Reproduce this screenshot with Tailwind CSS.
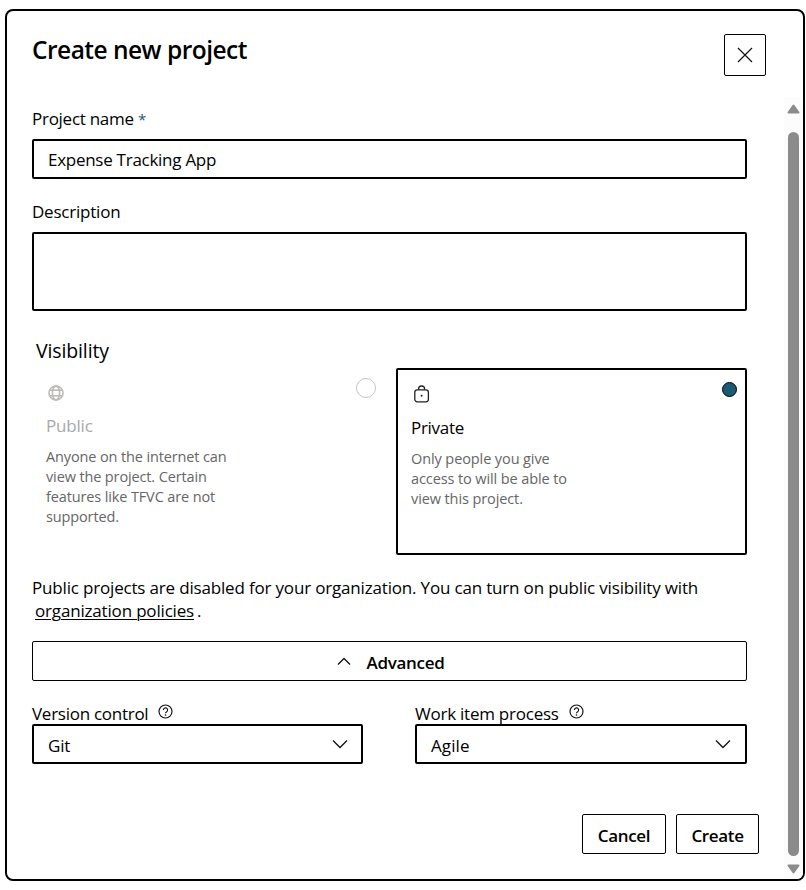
<!DOCTYPE html>
<html lang="en">
<head>
<meta charset="utf-8">
<title>Create new project</title>
<script src="https://cdn.jsdelivr.net/npm/@tailwindcss/browser@4"></script>
</head>
<body class="bg-white text-black font-['Open_Sans','Noto_Sans',sans-serif] text-[17px] leading-6 overflow-hidden whitespace-nowrap">
<main class="ml-[5px] mt-[9px] w-[800px] h-[872px] border-2 border-black rounded-lg flex flex-col">
  <header class="h-[86px] shrink-0 flex justify-between pl-[25px] pr-[37px] pt-[23px]">
    <h1 class="text-[24.5px] leading-8 font-semibold tracking-[-0.52px]">Create new project</h1>
    <button class="size-[42px] border border-black rounded-[2px] flex items-center justify-center" aria-label="Close">
      <svg width="16" height="16" viewBox="0 0 16 16" fill="none" stroke="#111" stroke-width="1.2"><path d="M1 1l14 14M15 1L1 15"/></svg>
    </button>
  </header>
  <div class="flex flex-1 min-h-0 justify-between">
    <form class="ml-[25px] w-[727px] pt-[10px] flex flex-col">
      <label class="tracking-[-0.27px] h-8 block">Project name <span class="text-[15px] text-[#1b5a73]">*</span></label>
      <div class="w-[715px] h-10 border-2 border-black rounded-[2px] pl-[14px] pt-0.5 flex items-center tracking-[-0.27px]">Expense Tracking App</div>
      <label class="tracking-[-0.22px] h-8 mt-[21px] block">Description</label>
      <div class="w-[715px] h-[79px] border-2 border-black rounded-[2px]"></div>
      <h2 class="ml-1 mt-7 h-[29px] text-[19.5px] tracking-[-0.13px]">Visibility</h2>
      <div class="w-[715px] h-[187px] flex justify-between">
        <section class="w-[346px] flex justify-between pl-[14px] pt-[17px] text-[#a9a9a9]">
          <div>
            <svg class="ml-0.5" width="16" height="16" viewBox="0 0 16 16" fill="none" stroke="#bdb8b8" stroke-width="1.6"><circle cx="8" cy="8" r="7"/><ellipse cx="8" cy="8" rx="3.6" ry="7"/><path d="M1.6 5.3h12.8M1.6 10.7h12.8"/></svg>
            <h3 class="mt-[13px] tracking-[-0.2px]">Public</h3>
            <p class="mt-[9px] text-[14.5px] leading-5 tracking-[-0.13px] text-[#666]">Anyone on the internet can<br>view the project. Certain<br>features like TFVC are not<br>supported.</p>
          </div>
          <span class="mr-0.5 -mt-[7px] size-5 rounded-full border border-[#c4c4c4]"></span>
        </section>
        <section class="w-[351px] border-2 border-black rounded-[2px] flex justify-between pl-[13px] pr-2 pt-[15px]">
          <div>
            <svg class="ml-[3px]" width="17" height="18" viewBox="0 0 17 18" fill="none" stroke="#222" stroke-width="1.3"><rect x=".8" y="4.8" width="13.6" height="12" rx="2.5"/><path d="M4.6 4.8V4a3 3 0 0 1 6 0v.8"/><circle cx="7.6" cy="10.8" r="1" fill="#222" stroke="none"/></svg>
            <h3 class="mt-[13px] tracking-[-0.3px]">Private</h3>
            <p class="mt-[9px] text-[14.5px] leading-5 tracking-[-0.1px] text-[#666]">Only people you give<br>access to will be able to<br>view this project.</p>
          </div>
          <span class="-mt-[3px] size-[15px] rounded-full border border-black bg-[#1b5a73]"></span>
        </section>
      </div>
      <p class="mt-[21px] leading-[23px] tracking-[-0.175px]">Public projects are disabled for your organization. You can turn on public visibility with<br><a class="ml-[3px] underline underline-offset-2 decoration-1">organization policies</a><span class="ml-[3px]">.</span></p>
      <button type="button" class="mt-[19px] w-[715px] h-10 border border-black rounded-[2px] flex items-center justify-center gap-4 pl-0.5 font-semibold tracking-[-0.3px]">
        <svg width="14" height="9" viewBox="0 0 14 9" fill="none" stroke="#111" stroke-width="1.3"><path d="M1 7.5l6-6 6 6"/></svg>
        <span class="pt-[3px]">Advanced</span>
      </button>
      <div class="mt-[21px] w-[715px] flex justify-between">
        <div class="w-[331px]">
          <div class="h-[22px] flex gap-[10px] tracking-[-0.27px]"><span>Version control</span>
            <svg class="mt-0.5" width="15" height="15" viewBox="0 0 15 15" fill="none" stroke="#111" stroke-width="1.15"><circle cx="7.5" cy="7.5" r="6.5"/><path d="M5.4 6a2.1 2.1 0 1 1 3.3 1.7c-.8.5-1.2.8-1.2 1.6"/><circle cx="7.5" cy="11" r=".8" fill="#111" stroke="none"/></svg>
          </div>
          <div class="h-10 border-2 border-black rounded-[2px] flex items-center justify-between pl-[14px] pr-[13px] tracking-[-0.2px]"><span class="pt-[3px]">Git</span>
            <svg width="16" height="10" viewBox="0 0 16 10" fill="none" stroke="#111" stroke-width="1.3"><path d="M1 1.5l7 7 7-7"/></svg></div>
        </div>
        <div class="w-[332px]">
          <div class="h-[22px] flex gap-[10px] tracking-[-0.24px]"><span>Work item process</span>
            <svg class="mt-0.5" width="15" height="15" viewBox="0 0 15 15" fill="none" stroke="#111" stroke-width="1.15"><circle cx="7.5" cy="7.5" r="6.5"/><path d="M5.4 6a2.1 2.1 0 1 1 3.3 1.7c-.8.5-1.2.8-1.2 1.6"/><circle cx="7.5" cy="11" r=".8" fill="#111" stroke="none"/></svg>
          </div>
          <div class="h-10 border-2 border-black rounded-[2px] flex items-center justify-between pl-[14px] pr-[14px] tracking-[0.1px]"><span class="pt-[3px]">Agile</span>
            <svg width="16" height="10" viewBox="0 0 16 10" fill="none" stroke="#111" stroke-width="1.3"><path d="M1 1.5l7 7 7-7"/></svg></div>
        </div>
      </div>
      <div class="mt-[50px] flex justify-end gap-[10px] font-semibold tracking-[-0.34px]">
        <button type="button" class="w-[84px] h-10 pt-[3px] border border-black rounded-[2px]">Cancel</button>
        <button type="button" class="w-[83px] h-10 pt-[3px] border border-black rounded-[2px]">Create</button>
      </div>
    </form>
    <div class="w-[19px] bg-[#fcfcfc] flex flex-col items-center pt-[7px] pb-[5px] rounded-br-md">
      <svg width="13" height="10" viewBox="0 0 13 10" fill="#8b8b8b" stroke="#8b8b8b" stroke-width="2" stroke-linejoin="round"><path d="M6.5 1.5L11.5 8.5H1.5z"/></svg>
      <div class="w-[11px] mt-[18px] mb-2 flex-1 rounded-full bg-[#8b8b8b]"></div>
      <svg width="13" height="10" viewBox="0 0 13 10" fill="#8b8b8b" stroke="#8b8b8b" stroke-width="2" stroke-linejoin="round"><path d="M6.5 8.5L11.5 1.5H1.5z"/></svg>
    </div>
  </div>
</main>
</body>
</html>
